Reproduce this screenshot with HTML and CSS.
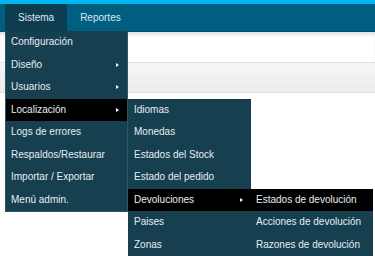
FILE: index.html
```html
<!DOCTYPE html>
<html lang="es">
<head>
    <meta charset="UTF-8">
    <meta name="viewport" content="width=device-width, initial-scale=1.0">
    <title>Admin</title>
    <link rel="stylesheet" href="styles.css">
</head>
<body>

    <div class="top-stripe"></div>

    <!-- Main navigation -->
    <ul class="nav">
        <li class="nav-item active">
            <span class="nav-link">Sistema</span>
            <ul class="menu">
                <li><span>Configuración</span></li>
                <li class="has-sub"><span>Diseño</span></li>
                <li class="has-sub"><span>Usuarios</span></li>
                <li class="has-sub open">
                    <span>Localización</span>
                    <ul class="menu sub">
                        <li><span>Idiomas</span></li>
                        <li><span>Monedas</span></li>
                        <li><span>Estados del Stock</span></li>
                        <li><span>Estado del pedido</span></li>
                        <li class="has-sub open">
                            <span>Devoluciones</span>
                            <ul class="menu sub">
                                <li class="open"><span>Estados de devolución</span></li>
                                <li><span>Acciones de devolución</span></li>
                                <li><span>Razones de devolución</span></li>
                            </ul>
                        </li>
                        <li><span>Paises</span></li>
                        <li><span>Zonas</span></li>
                    </ul>
                </li>
                <li><span>Logs de errores</span></li>
                <li><span>Respaldos/Restaurar</span></li>
                <li><span>Importar / Exportar</span></li>
                <li><span>Menú admin.</span></li>
            </ul>
        </li>
        <li class="nav-item">
            <span class="nav-link">Reportes</span>
        </li>
    </ul>

    <div class="page">
        <div class="page-head"></div>
        <div class="toolbar"></div>
    </div>

</body>
</html>
```

FILE: styles.css
```css
html, body {
    height: 100%;
}

body {
    margin: 0;
    min-height: 256px;
    font-family: "Liberation Sans", Arial, sans-serif;
    font-size: 10px;
    background: #fff;
    color: #333;
    overflow: hidden;
}

ul {
    list-style: none;
    margin: 0;
    padding: 0;
}

.top-stripe {
    height: 4px;
    background: #00b5f0;
}

.nav {
    display: flex;
    height: 27px;
    padding-left: 5px;
    background: #005f80;
    border-bottom: 1px solid #004e6a;
    position: relative;
    z-index: 10;
}

.nav-item {
    position: relative;
}

.nav-link {
    display: block;
    line-height: 27px;
    padding: 0 13px;
    color: #dbe9ef;
}

.nav-item.active .nav-link {
    background: #0e3c51;
}

.menu {
    position: absolute;
    left: 0;
    top: 27px;
    width: 123px;
    background: #163f50;
    border: 1px solid #2d5566;
    border-top: none;
    box-sizing: border-box;
}

.menu li {
    position: relative;
}

.menu li > span {
    display: block;
    height: 22.5px;
    line-height: 22.5px;
    padding-left: 5px;
    color: #e6eef1;
    white-space: nowrap;
}

.menu li.open > span {
    background: #000;
}

.menu li.has-sub > span::after {
    content: "";
    position: absolute;
    right: 8px;
    top: 9px;
    border-left: 3px solid #fff;
    border-top: 2.5px solid transparent;
    border-bottom: 2.5px solid transparent;
}

.menu.sub {
    left: 122px;
    top: 0;
    border: none;
    width: 123px;
}

.menu.sub li > span {
    padding-left: 6px;
}

.page {
    height: calc(100% - 32px);
}

.page-head {
    height: 30px;
    box-shadow: inset 0 4px 4px -2px rgba(0, 0, 0, 0.15);
}

.toolbar {
    height: 29px;
    background: linear-gradient(#f6f6f6, #ececec);
    border-top: 1px solid #dedede;
    border-bottom: 1px solid #dedede;
}
```
